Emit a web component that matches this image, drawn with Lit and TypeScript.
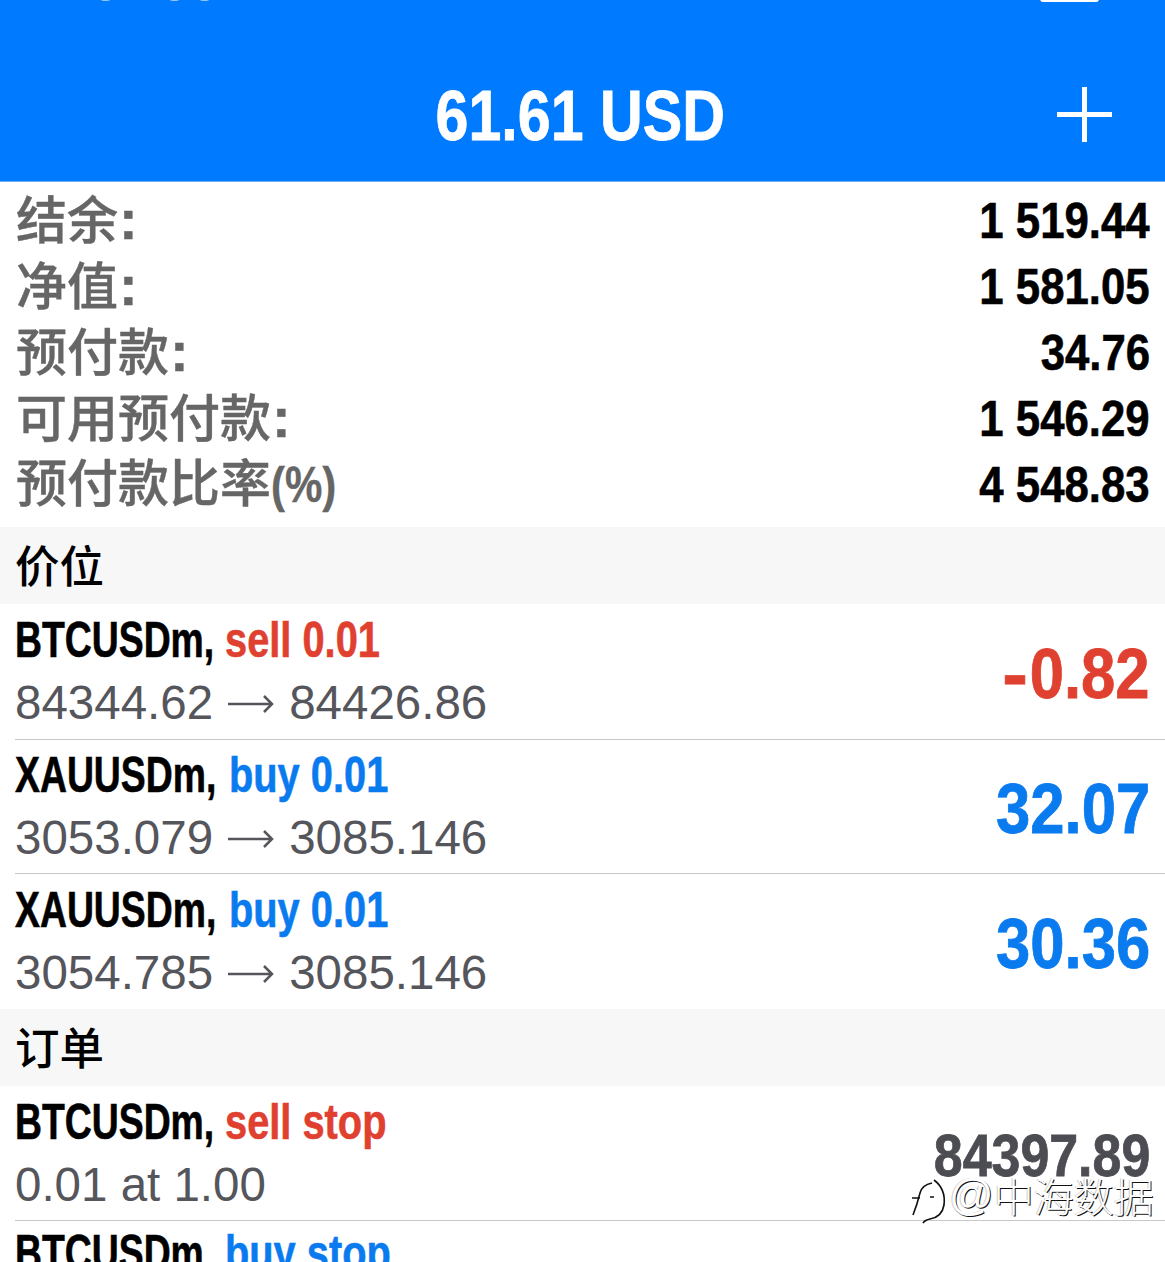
import { LitElement, html, css } from "lit";
import { customElement } from "lit/decorators.js";

const summary = [
  ["结余", ":", "1 519.44"],
  ["净值", ":", "1 581.05"],
  ["预付款", ":", "34.76"],
  ["可用预付款", ":", "1 546.29"],
  ["预付款比率", "(%)", "4 548.83"],
];
const positions = [
  { s: "BTCUSDm,", k: "", side: "sell", c: "red", a: "84344.62", b: "84426.86", v: "0.82", neg: true },
  { s: "XAUUSDm,", k: "xau", side: "buy", c: "blue", a: "3053.079", b: "3085.146", v: "32.07", neg: false },
  { s: "XAUUSDm,", k: "xau", side: "buy", c: "blue", a: "3054.785", b: "3085.146", v: "30.36", neg: false },
];

@customElement("app-root")
export class AppRoot extends LitElement {
  static styles = css`
    :host { display: block; position: relative; width: 1165px; height: 1262px; overflow: hidden; background: #fff;
      font-family: "Liberation Sans", "Noto Sans CJK SC", sans-serif; }
    .head { height: 182px; background: #007aff; border-bottom: 1px solid #6cb0f5; box-sizing: border-box; position: relative;
      display: flex; align-items: center; justify-content: center; padding-top: 50px; }
    .balance { color: #fff; font-weight: 700; font-size: 70px; line-height: 70px; display: inline-block; transform: scaleX(.845); white-space: nowrap; position: relative; left: -2px; -webkit-text-stroke: .8px #fff; }
    .plus { position: absolute; left: 1057px; top: 87px; width: 55px; height: 55px; }
    .batt { position: absolute; left: 1040px; top: -10px; width: 59px; height: 12px; background: #fff; border-radius: 3px; }
    .dot { position: absolute; top: -3px; height: 4px; background: #8fc4ff; border-radius: 50%; }
    .d1 { left: 100px; width: 11px; }
    .d2 { left: 169px; width: 11px; }
    .d3 { left: 199px; width: 11px; }
    .summary { padding: 6px 15px 9px 16px; display: flex; flex-direction: column; }
    .srow { height: 66px; display: flex; justify-content: space-between; align-items: center; }
    .slabel { font-family: "Noto Sans CJK SC", sans-serif; font-size: 51px; font-weight: 500; color: #666; line-height: 66px; white-space: nowrap; margin-top: -6px; display: flex; align-items: baseline; -webkit-text-stroke: .4px #666; }
    .colon { font-family: "Liberation Sans", sans-serif; margin-left: 1px; font-weight: 700; font-size: 56px; line-height: 66px; }
    .pct { font-family: "Liberation Sans", sans-serif; font-weight: 700; font-size: 50px; display: inline-block; transform: scaleX(.84); transform-origin: left center; }
    .sval { font-weight: 700; font-size: 50px; color: #000; display: inline-block; transform: scaleX(.875); transform-origin: right center; white-space: nowrap; -webkit-text-stroke: .6px #000; }
    .section { height: 77px; box-sizing: border-box; background: #f7f7f7; padding: 0 0 4px 15px; display: flex; align-items: center;
      font-family: "Noto Sans CJK SC", sans-serif; font-size: 44.5px; font-weight: 500; color: #000; }
    .row { height: 135px; box-sizing: border-box; position: relative; padding: 1px 15px 0 15px; display: flex; justify-content: space-between; align-items: center; }
    .row + .row::before { content: ""; position: absolute; left: 15px; right: 0; top: -1px; height: 1px; background: #c8c8c8; }
    .row.low::before { top: 0; }
    .row.cut { align-items: flex-start; }
    .main { display: flex; flex-direction: column; }
    .line1 { display: flex; height: 62px; line-height: 62px; font-weight: 700; font-size: 50px; white-space: nowrap; }
    .sym { width: 210px; flex: none; color: #000; transform: scaleX(.747); transform-origin: left center; -webkit-text-stroke: .6px #000; }
    .sym.xau { width: 214px; }
    .act { flex: none; transform: scaleX(.796); transform-origin: left center; -webkit-text-stroke: .6px currentColor; }
    .l2 { font-size: 47.5px; line-height: 64px; color: #55555c; white-space: nowrap; display: flex; align-items: center; gap: 15px; }
    .arrow { width: 46px; height: 20px; flex: none; margin-top: 2px; }
    .val { font-weight: 700; font-size: 70px; display: inline-block; transform: scaleX(.88); transform-origin: right center; white-space: nowrap; -webkit-text-stroke: .8px currentColor; margin-top: 4px; }
    .hy { display: inline-block; transform: scaleX(1.25); margin-right: 5px; }
    .red { color: #e0402f; }
    .blue { color: #0a7bef; }
    .dark { color: #4c4c53; font-size: 60px; transform: scaleX(.865); margin-top: 2px; }
    .wm { position: absolute; left: 912px; top: 1172px; display: flex; align-items: center; color: #fff;
      font-family: "Noto Sans CJK SC", sans-serif; font-weight: 300; font-size: 40px; line-height: 46px; text-shadow: 1px 1px 0 #111, -1px 0 0 #ccc; }
    .wm svg { margin-right: 1px; }
    .wm span { margin-bottom: 10px; }
    .wm .at { font-size: 44px; font-family: "Liberation Sans", sans-serif; }
  `;
  render() {
    return html`
      <div class="head">
        <i class="dot d1"></i><i class="dot d2"></i><i class="dot d3"></i>
        <div class="batt"></div>
        <span class="balance">61.61 USD</span>
        <svg class="plus" viewBox="0 0 55 55"><path d="M27.5 0V55M0 27.5H55" stroke="#fff" stroke-width="5" fill="none"/></svg>
      </div>
      <div class="summary">
        ${summary.map(([a, c, b]) => html`<div class="srow"><span class="slabel">${a}<span class=${c === ":" ? "colon" : "pct"}>${c}</span></span><span class="sval">${b}</span></div>`)}
      </div>
      <div class="section">价位</div>
      ${positions.map((p, i) => html`<div class="row ${i === 1 ? "low" : ""}">
        <div class="main">
          <div class="line1"><span class="sym ${p.k}">${p.s}</span><span class="act ${p.c}">${p.side} 0.01</span></div>
          <div class="l2"><span>${p.a}</span><svg class="arrow" viewBox="0 0 46 20" fill="none" stroke="#55555c" stroke-width="2.5"><path d="M0 10H44M36 2L44 10L36 18"/></svg><span>${p.b}</span></div>
        </div>
        <span class="val ${p.c}">${p.neg ? html`<span class="hy">-</span>` : ""}${p.v}</span>
      </div>`)}
      <div class="section">订单</div>
      <div class="row">
        <div class="main">
          <div class="line1"><span class="sym">BTCUSDm,</span><span class="act red">sell stop</span></div>
          <div class="l2">0.01 at 1.00</div>
        </div>
        <span class="val dark">84397.89</span>
      </div>
      <div class="row cut">
        <div class="main">
          <div class="line1"><span class="sym">BTCUSDm,</span><span class="act blue">buy stop</span></div>
        </div>
      </div>
      <div class="wm">
        <svg width="36" height="50" viewBox="0 0 36 50" fill="none" stroke="#111" stroke-width="1.6"><path d="M1 40Q5 30 8 18Q10 10 20 8M0 23H8M18 22H22M22 5Q34 14 32 30Q30 42 18 44Q13 45 11 48"/></svg>
        <span class="at">@</span><span>中海数据</span>
      </div>
    `;
  }
}
